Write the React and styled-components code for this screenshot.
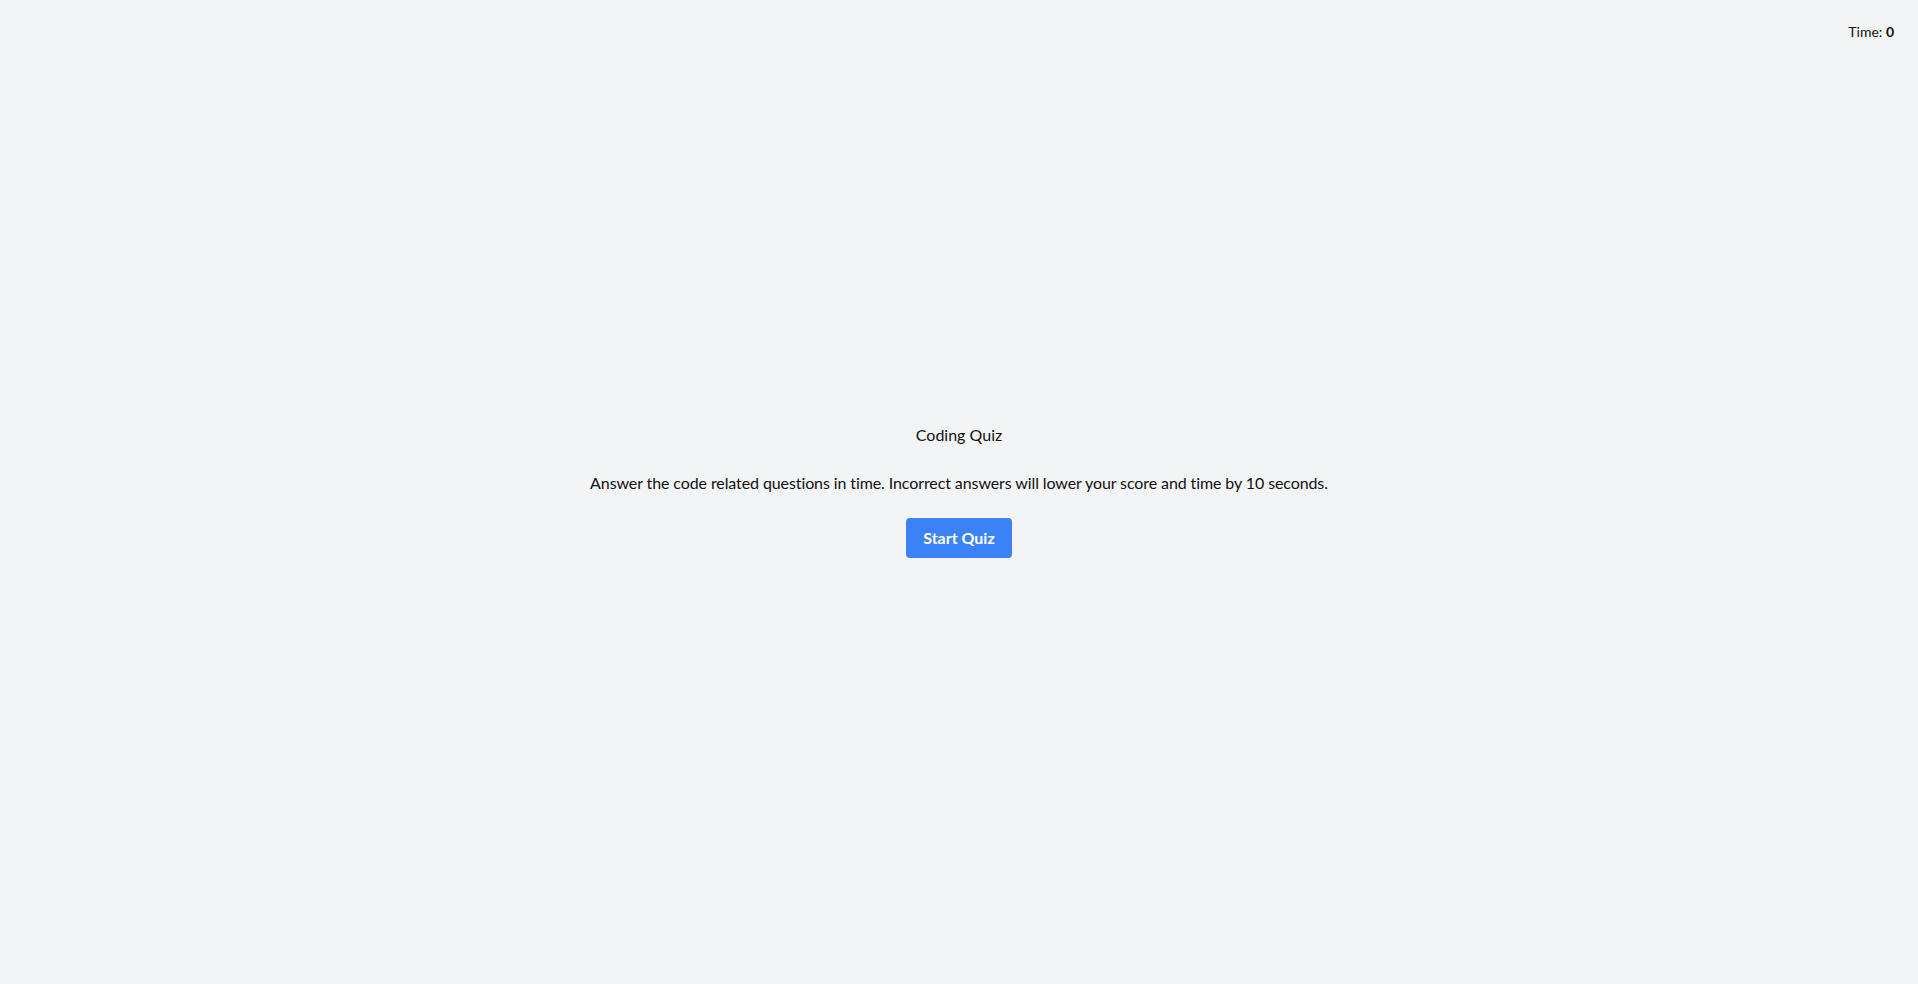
import React from 'react'
import styled, { createGlobalStyle } from 'styled-components'

const GlobalStyle = createGlobalStyle`
  html, body {
    margin: 0;
    padding: 0;
    background: #f3f4f6;
    font-family: Lato, "Noto Sans", sans-serif;
    color: #111;
  }
`

const Page = styled.div`
  display: flex;
  flex-direction: column;
  height: 100vh;
  overflow: hidden;
`

const Header = styled.header`
  height: 62px;
  flex-shrink: 0;
  display: flex;
  justify-content: flex-end;
  align-items: center;
  padding: 0 24px;
  font-size: 14px;
  b {
    font-weight: 700;
  }
`

const Main = styled.main`
  flex: 1;
  display: flex;
  flex-direction: column;
  align-items: center;
  justify-content: center;
  padding-bottom: 66px;
  text-align: center;
  h1 {
    font-size: 16px;
    font-weight: 400;
    line-height: 24px;
    margin: 0 0 24px;
  }
  p {
    font-size: 16px;
    line-height: 24px;
    letter-spacing: -0.1px;
    margin: 0 0 23px;
  }
`

const StartButton = styled.button`
  font-family: inherit;
  font-size: 16px;
  font-weight: 700;
  color: #fff;
  background: #3b82f6;
  border: none;
  border-radius: 4px;
  height: 40px;
  padding: 0 17px;
  cursor: pointer;
`

export default function App() {
  return (
    <Page>
      <GlobalStyle />
      <Header>
        <span>Time: <b>0</b></span>
      </Header>
      <Main>
        <h1>Coding Quiz</h1>
        <p>Answer the code related questions in time. Incorrect answers will lower your score and time by 10 seconds.</p>
        <StartButton>Start Quiz</StartButton>
      </Main>
    </Page>
  )
}
